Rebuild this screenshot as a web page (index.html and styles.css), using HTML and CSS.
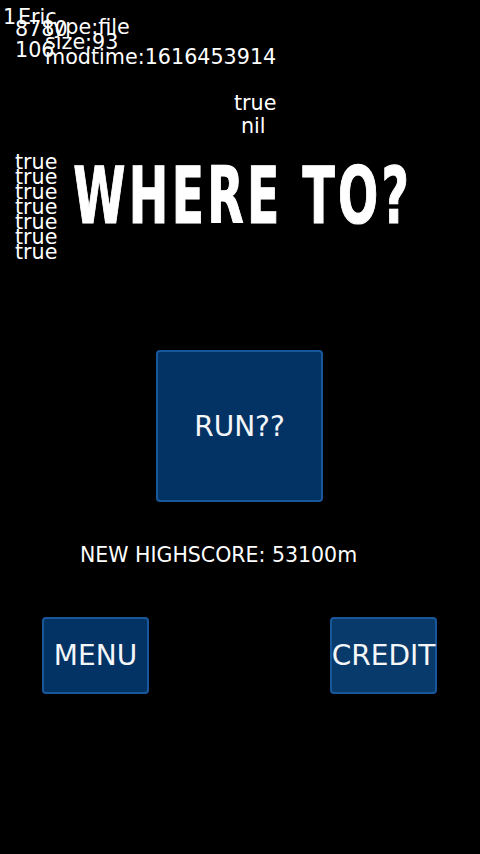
FILE: index.html
```html
<!DOCTYPE html>
<html>
<head>
<meta charset="utf-8">
<link rel="stylesheet" href="styles.css">
</head>
<body>
<div class="screen">
  <div class="debug">
    <span class="dbg d-1">1</span>
    <span class="dbg d-eric">Eric</span>
    <span class="dbg d-8780">8780</span>
    <span class="dbg d-type">type:file</span>
    <span class="dbg d-size">size:93</span>
    <span class="dbg d-106">106</span>
    <span class="dbg d-mod">modtime:1616453914</span>
    <span class="dbg d-true">true</span>
    <span class="dbg d-nil">nil</span>
    <div class="dbg truestack">
      <span>true</span><span>true</span><span>true</span><span>true</span><span>true</span><span>true</span><span>true</span>
    </div>
  </div>

  <main class="menu">
    <h1 class="title"><span>WHERE TO?</span></h1>
    <button class="btn run">RUN??</button>
    <p class="score">NEW HIGHSCORE: 53100m</p>
    <div class="row">
      <button class="btn small">MENU</button>
      <button class="btn small credit">CREDIT</button>
    </div>
  </main>
</div>
</body>
</html>
```

FILE: styles.css
```css
html, body {
  margin: 0;
  padding: 0;
  background: #000;
}
.screen {
  position: relative;
  width: 480px;
  height: 854px;
  overflow: hidden;
  background: #000;
  color: #fff;
  font-family: "DejaVu Sans", sans-serif;
}
.debug .dbg {
  position: absolute;
  font-size: 20.7px;
  line-height: 24px;
  white-space: nowrap;
  z-index: 2;
}
.d-1 { left: 3px; top: 5px; }
.d-eric { left: 18px; top: 5px; }
.d-8780 { left: 15px; top: 17px; }
.d-type { left: 45px; top: 15px; }
.d-size { left: 45px; top: 30px; }
.d-106 { left: 15px; top: 38px; }
.d-mod { left: 45px; top: 45px; }
.d-true { left: 234px; top: 91px; }
.d-nil { left: 241px; top: 114px; }
.truestack {
  left: 15px;
  top: 155px;
  display: flex;
  flex-direction: column;
}
.truestack span {
  line-height: 15px;
}

.menu {
  display: flex;
  flex-direction: column;
  align-items: stretch;
  padding-top: 155px;
}
.title {
  margin: 0;
  height: 82px;
  display: flex;
  justify-content: center;
  white-space: nowrap;
  font-family: "DejaVu Sans", sans-serif;
  font-stretch: condensed;
  font-weight: 700;
  font-size: 79px;
  line-height: 82px;
  padding-left: 5px;
}
.title span {
  flex: none;
  white-space: nowrap;
  transform: scaleX(0.665);
  transform-origin: center;
  letter-spacing: 5px;
  -webkit-text-stroke: 1.2px #fff;
}
.btn {
  box-sizing: border-box;
  background: #033365;
  border: 2px solid #18589a;
  border-radius: 4px;
  color: #f4f6f8;
  font-family: "DejaVu Sans", sans-serif;
  font-size: 28px;
  padding: 0;
  display: flex;
  align-items: center;
  justify-content: center;
  white-space: nowrap;
}
.run {
  align-self: center;
  margin-top: 113px;
  width: 167px;
  height: 152px;
  margin-left: -1px;
}
.score {
  margin: 41px 0 0 0;
  padding-left: 80px;
  font-size: 20.5px;
  line-height: 24px;
}
.row {
  display: flex;
  gap: 181px;
  padding-left: 42px;
  margin-top: 50px;
}
.small {
  width: 107px;
  height: 77px;
  overflow: visible;
}
.credit {
  background: #083a6b;
}
```
